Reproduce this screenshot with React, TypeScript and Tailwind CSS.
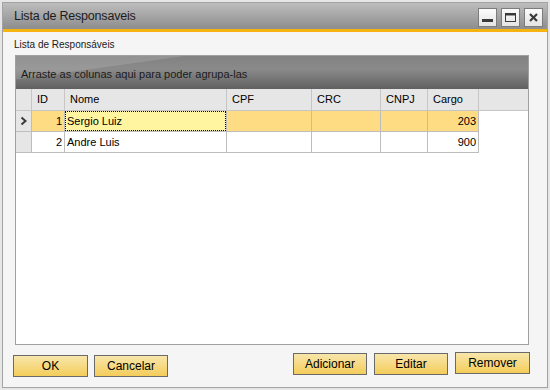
import React from 'react';

const FONT = "font-['Liberation_Sans',Arial,sans-serif]";

type Row = { id: number; nome: string; cargo: string; current?: boolean };

const ROWS: Row[] = [
  { id: 1, nome: 'Sergio Luiz', cargo: '203', current: true },
  { id: 2, nome: 'Andre Luis', cargo: '900' },
];

const COLS = 'grid-cols-[16px_33px_162px_85px_69px_47px_51px_1fr]';

function TitleButton({ kind }: { kind: 'min' | 'max' | 'close' }) {
  return (
    <div className="w-[19px] h-[19px] border border-[#7c7c7c] bg-[linear-gradient(to_bottom,#fbfbfb,#e4e4e4)] flex items-center justify-center">
      <svg width="13" height="13" viewBox="0 0 13 13">
        {kind === 'min' && <rect x="1" y="8" width="11" height="3" fill="#3a3a3a" />}
        {kind === 'max' && (
          <g fill="none" stroke="#3a3a3a">
            <rect x="1.5" y="2.5" width="10" height="8" />
            <line x1="1.5" y1="3.5" x2="11.5" y2="3.5" strokeWidth="2" />
          </g>
        )}
        {kind === 'close' && (
          <g stroke="#3a3a3a" strokeWidth="2.2">
            <line x1="3" y1="3" x2="10" y2="10" />
            <line x1="10" y1="3" x2="3" y2="10" />
          </g>
        )}
      </svg>
    </div>
  );
}

function Button({ label, className }: { label: string; className?: string }) {
  return (
    <button
      className={`h-[22px] border border-[#6a6a6a] bg-[linear-gradient(to_bottom,#f8e6ab,#f4cd5a)] text-[12px] text-black leading-none ${className ?? ''}`}
    >
      {label}
    </button>
  );
}

function HeaderCell({ label }: { label?: string }) {
  return (
    <div className="h-[22px] border-r border-b border-[#c6c6c6] bg-[#e6e6e6] pl-[5px] flex items-center text-[11px] text-black">
      {label}
    </div>
  );
}

export default function App() {
  return (
    <div className={`w-[550px] h-[390px] bg-[#e6e6e6] pt-[2px] pl-[2px] ${FONT}`}>
      <div className="w-[546px] h-[386px] border border-[#a3a3a3] flex flex-col bg-[#f5f5f5]">
        {/* title bar */}
        <div className="h-[26px] shrink-0 bg-[linear-gradient(to_bottom,#bdbdbd,#8d8d8d)] flex items-center pl-[11px] pr-[4px]">
          <span className="text-[12.5px] text-[#1c1c1c] tracking-[-0.2px] mt-[1px]">Lista de Responsaveis</span>
          <div className="ml-auto flex gap-[4px] mt-[2px]">
            <TitleButton kind="min" />
            <TitleButton kind="max" />
            <TitleButton kind="close" />
          </div>
        </div>
        <div className="h-[3px] shrink-0 bg-[#f6b412]" />

        {/* body */}
        <div className="flex-1 flex flex-col pt-[6px]">
          <div className="pl-[11px] h-[13px] text-[10px] leading-[13px] text-[#1a1a1a]">Lista de Responsáveis</div>

          <div className="ml-[12px] mt-[4px] w-[514px] h-[290px] border border-[#a0a0a0] bg-white flex flex-col">
            {/* group-by area */}
            <div className="h-[33px] shrink-0 flex items-center pl-[5px] pt-[4px] text-[11px] text-[#1b1b1b] bg-[linear-gradient(172deg,rgba(255,255,255,0.13)_0%,rgba(255,255,255,0.13)_22%,rgba(255,255,255,0)_23%),linear-gradient(to_bottom,#828282,#8a8a8a_40%,#606060)]">
              Arraste as colunas aqui para poder agrupa-las
            </div>

            {/* header */}
            <div className={`grid ${COLS}`}>
              <HeaderCell />
              <HeaderCell label="ID" />
              <HeaderCell label="Nome" />
              <HeaderCell label="CPF" />
              <HeaderCell label="CRC" />
              <HeaderCell label="CNPJ" />
              <HeaderCell label="Cargo" />
              <div className="h-[22px] border-b border-[#c6c6c6] bg-[#e6e6e6]" />
            </div>

            {/* rows */}
            {ROWS.map((r) => {
              const bg = r.current ? 'bg-[#fddc84]' : 'bg-white';
              const cell = `h-[21px] border-r border-b border-[#bdbdbd] ${bg} text-[11px] text-black flex items-center`;
              return (
                <div key={r.id} className={`grid ${COLS}`}>
                  <div className="h-[21px] border-r border-b border-[#bdbdbd] bg-[#e6e6e6] flex items-center pl-[4px]">
                    {r.current && (
                      <svg width="8" height="10" viewBox="0 0 8 10">
                        <path d="M1.5 1.5 L5.5 5 L1.5 8.5" fill="none" stroke="#3c3c3c" strokeWidth="2" />
                      </svg>
                    )}
                  </div>
                  <div className={`${cell} justify-end pr-[2px]`}>{r.id}</div>
                  {r.current ? (
                    <div className="h-[21px] border-r border-b border-[#bdbdbd] bg-[#fff5a1] flex">
                      <div className="flex-1 border border-dotted border-black flex items-center pl-[1px] text-[11px] text-black">
                        {r.nome}
                      </div>
                    </div>
                  ) : (
                    <div className={`${cell} pl-[2px]`}>{r.nome}</div>
                  )}
                  <div className={cell} />
                  <div className={cell} />
                  <div className={cell} />
                  <div className={`${cell} justify-end pr-[2px]`}>{r.cargo}</div>
                  <div className="h-[21px] bg-white" />
                </div>
              );
            })}
          </div>

          {/* buttons */}
          <div className="flex items-start mt-[7px] pl-[10px]">
            <Button label="OK" className="w-[75px] mt-[3px]" />
            <Button label="Cancelar" className="w-[74px] ml-[6px] mt-[3px]" />
            <Button label="Adicionar" className="w-[74px] ml-[125px] mt-[1px]" />
            <Button label="Editar" className="w-[74px] ml-[7px] mt-[1px]" />
            <Button label="Remover" className="w-[75px] ml-[7px]" />
          </div>
        </div>
      </div>
    </div>
  );
}
